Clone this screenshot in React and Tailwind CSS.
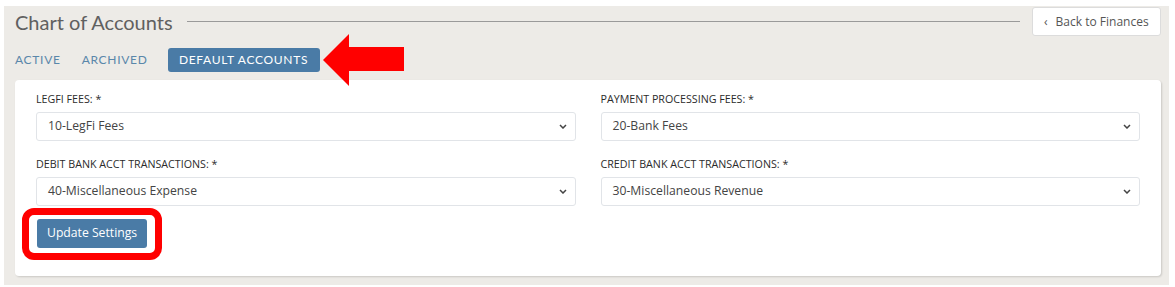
import React from "react";

const labelCls = "block text-[10.7px] uppercase text-[#2b2b2b] leading-[14px] mb-[6px]";

function Select({ value }) {
  return (
    <div className="flex items-center justify-between h-[29px] rounded-[3px] border border-[#e1e4e8] bg-white pl-[11px] pr-[8px] text-[12.2px] text-[#444]">
      <span>{value}</span>
      <svg width="8" height="5" viewBox="0 0 8 5" className="text-[#444]">
        <path d="M1 1l3 3 3-3" fill="none" stroke="currentColor" strokeWidth="1.5" />
      </svg>
    </div>
  );
}

export default function App() {
  return (
    <div className="bg-white w-[1175px] h-[287px] pt-[6px] pl-[4px]" style={{ fontFamily: "'Open Sans', sans-serif" }}>
      <div className="w-[1165px] h-[279px] bg-[#edebe7] pl-[11px] pr-[8px] pt-[1px]">
        {/* Header */}
        <div className="flex items-center h-[29px]">
          <h1 className="text-[20px] text-[#606060] leading-none" style={{ fontFamily: "Lato, sans-serif" }}>
            Chart of Accounts
          </h1>
          <div className="flex-1 h-px bg-[#9a9a9a] ml-[14px] mr-[12px]" />
          <button className="flex items-center gap-[8px] h-[29px] w-[129px] pl-[11px] bg-white border border-[#dcdcdc] rounded-[3px] text-[12px] text-[#555]">
            <span className="text-[12px] leading-none">‹</span>
            Back to Finances
          </button>
        </div>

        {/* Tabs */}
        <div className="relative flex items-center h-[24px] mt-[12px] text-[12px] tracking-[0.7px]" style={{ fontFamily: "Lato, sans-serif" }}>
          <span className="text-[#5a87aa]">ACTIVE</span>
          <span className="text-[#5a87aa] ml-[21px]">ARCHIVED</span>
          <span className="ml-[20px] h-[24px] w-[152px] flex items-center justify-center rounded-[3px] bg-[#4a7ba6] text-white">
            DEFAULT ACCOUNTS
          </span>
          <svg width="81" height="52" viewBox="0 0 81 52" className="absolute left-[308px] top-[-14px]">
            <polygon points="0,26 26,0 26,13 81,13 81,37 26,37 26,52" fill="#ff0000" />
          </svg>
        </div>

        {/* Card */}
        <div className="mt-[8px] h-[196px] w-[1146px] bg-white rounded-[4px] shadow-[1px_1px_2px_rgba(0,0,0,0.15)] pt-[12px] pl-[21px] pr-[21px]">
          <div className="grid grid-cols-2 gap-x-[25px] gap-y-[16px]">
            <div>
              <label className={labelCls}>LegFi Fees: *</label>
              <Select value="10-LegFi Fees" />
            </div>
            <div>
              <label className={labelCls}>Payment Processing Fees: *</label>
              <Select value="20-Bank Fees" />
            </div>
            <div>
              <label className={labelCls}>Debit Bank Acct Transactions: *</label>
              <Select value="40-Miscellaneous Expense" />
            </div>
            <div>
              <label className={labelCls}>Credit Bank Acct Transactions: *</label>
              <Select value="30-Miscellaneous Revenue" />
            </div>
          </div>

          <div className="mt-[13px] pl-[1px]">
            <span className="relative inline-block">
              <button className="h-[29px] px-[10px] rounded-[3px] bg-[#4a7ba6] text-white text-[12.2px]">
                Update Settings
              </button>
              <span className="absolute left-[-15px] right-[-15px] top-[-11px] bottom-[-12px] border-[7px] border-[#ff0000] rounded-[12px]" />
            </span>
          </div>
        </div>
      </div>
    </div>
  );
}
